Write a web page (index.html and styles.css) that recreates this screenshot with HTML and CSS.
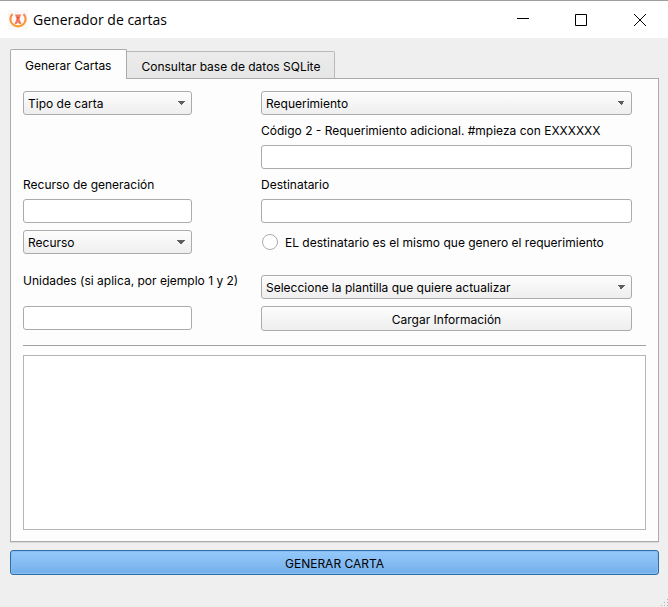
FILE: index.html
```html
<!DOCTYPE html>
<html lang="es">
<head>
<meta charset="utf-8">
<meta name="viewport" content="width=device-width, initial-scale=1">
<title>Generador de cartas</title>
<link rel="stylesheet" href="styles.css">
</head>
<body>
<div class="window">
  <header class="titlebar">
    <svg class="logo" width="20" height="20" viewBox="0 0 20 20" aria-hidden="true">
      <defs><linearGradient id="ring" x1="0" y1="0" x2="0" y2="1"><stop offset="0" stop-color="#f58a4b"/><stop offset="1" stop-color="#f7a02c"/></linearGradient></defs>
      <rect width="20" height="20" fill="#fbf8f7"/>
      <path d="M4.500 4A7.600 7.300 0 1 0 15.500 4" fill="none" stroke="url(#ring)" stroke-width="2.200"/>
      <path d="M7 4.500h6l-1.500 4.500 2 5h-2l-1.500-1.500-1.500 1.500h-2l2-5z" fill="#f27a5d"/>
      <path d="M9 7h2l-1 3z" fill="#d84a32"/>
    </svg>
    <h1 class="title">Generador de cartas</h1>
    <div class="window-buttons">
      <button class="window-button" type="button" aria-label="Minimizar"><svg width="12" height="12" viewBox="0 0 12 12"><path d="M0 4.500h12"/></svg></button>
      <button class="window-button" type="button" aria-label="Maximizar"><svg width="12" height="12" viewBox="0 0 12 12"><path d="M.5.5h11v11H.5z"/></svg></button>
      <button class="window-button" type="button" aria-label="Cerrar"><svg width="14" height="12" viewBox="0 0 14 12"><path d="M2 0l12 12M14 0L2 12"/></svg></button>
    </div>
  </header>
  <main class="content">
    <div class="tabs" role="tablist">
      <button class="tab tab-active" type="button" role="tab" aria-selected="true">Generar Cartas</button>
      <button class="tab" type="button" role="tab" aria-selected="false">Consultar base de datos SQLite</button>
    </div>
    <section class="panel">
      <div class="form">
        <select class="field left" aria-label="Tipo de carta"><option>Tipo de carta</option></select>
        <select class="field right" aria-label="Requerimiento"><option>Requerimiento</option></select>
        <label class="caption right" for="codigo">Código 2 - Requerimiento adicional. #mpieza con EXXXXXX</label>
        <input class="field right" id="codigo" type="text">
        <label class="caption left" for="recurso">Recurso de generación</label>
        <label class="caption right" for="destinatario">Destinatario</label>
        <input class="field left" id="recurso" type="text">
        <input class="field right" id="destinatario" type="text">
        <select class="field left" aria-label="Recurso"><option>Recurso</option></select>
        <label class="choice right"><input class="radio" type="radio"><span class="caption">EL destinatario es el mismo que genero el requerimiento</span></label>
        <label class="caption left" for="unidades">Unidades (si aplica, por ejemplo 1 y 2)</label>
        <select class="field right template" aria-label="Plantilla"><option>Seleccione la plantilla que quiere actualizar</option></select>
        <input class="field left" id="unidades" type="text">
        <button class="button right" type="button">Cargar Información</button>
      </div>
      <hr class="divider">
      <textarea class="output" aria-label="Información"></textarea>
    </section>
    <button class="button primary" type="button">GENERAR CARTA</button>
  </main>
  <svg class="grip" width="7" height="7" viewBox="0 0 7 7" aria-hidden="true"><path d="M6 0h1v1H6zM3 3h1v1H3zM6 3h1v1H6zM0 6h1v1H0zM3 6h1v1H3zM6 6h1v1H6z" fill="#b4b4b4"/></svg>
</div>
</body>
</html>
```
FILE: styles.css
```css
* {
  box-sizing: border-box;
}

body {
  margin: 0;
  background: #efefef;
  color: #000;
  font: 12px/16px Inter, "Noto Sans", sans-serif;
}

button,
input,
select,
textarea {
  margin: 0;
  color: inherit;
  font: inherit;
}

.window {
  position: relative;
  display: flex;
  flex-direction: column;
  min-height: 100vh;
  border-top: 1px solid #a19d9b;
}

.titlebar {
  display: flex;
  align-items: center;
  height: 37px;
  padding-left: 8px;
  background: #fff;
}

.title {
  flex: 1;
  margin: 0 0 0 5px;
  font: 14px/20px "Open Sans", sans-serif;
}

.window-buttons {
  display: flex;
}

.window-button {
  display: grid;
  place-items: center;
  width: 58px;
  height: 37px;
  padding: 0;
  border: 0;
  background: none;
}

.window-button svg {
  fill: none;
  stroke: #000;
}

.content {
  display: flex;
  flex: 1;
  flex-direction: column;
  padding: 11px 9px 32px 10px;
}

.tabs {
  display: flex;
  align-items: flex-end;
}

.tab {
  height: 27px;
  padding: 4px 14px 0;
  border: 1px solid #b9b9b9;
  border-width: 1px 1px 0 0;
  border-radius: 0 2px 0 0;
  background: linear-gradient(#ebebeb, #e6e6e6);
}

.tab-active {
  z-index: 1;
  height: 30px;
  margin-bottom: -1px;
  padding: 2px 15px 0 14px;
  border-color: #ababab;
  border-left-width: 1px;
  border-radius: 2px 2px 0 0;
  background: #fdfdfd;
}

.panel {
  display: flex;
  flex: 1;
  flex-direction: column;
  padding: 12px 12px 11px;
  border: 1px solid #ababab;
  background: #fdfdfd;
  box-shadow: 0 1px #dadada;
}

.form {
  display: grid;
  grid-template-columns: 231px 1fr;
  grid-template-rows: 24px 16px 24px 16px 24px 24px 38px 25px;
  gap: 7px;
  align-items: center;
  padding-right: 14px;
}

.left {
  grid-column: 1;
}

.right {
  grid-column: 2;
}

.caption {
  padding-top: 2px;
}

.field {
  width: 100%;
  height: 24px;
  padding: 1px 4px 0;
  border: 1px solid #ababab;
  border-radius: 3px;
  background: #fff;
}

.field.left {
  align-self: start;
  width: 169px;
}

select.field {
  appearance: none;
  background:
    conic-gradient(from -45deg at 50% 100%, #5e5e5e 90deg, transparent 0) right 6px center / 8px 4px no-repeat,
    linear-gradient(#fdfdfd, #eee);
}

.template {
  align-self: end;
}

.choice {
  display: flex;
  align-items: center;
  gap: 7px;
}

.radio {
  appearance: none;
  width: 16px;
  height: 16px;
  margin-left: 1px;
  border: 1px solid #ababab;
  border-radius: 50%;
  background: #fff;
}

.button {
  height: 25px;
  padding-top: 3px;
  border: 1px solid #ababab;
  border-radius: 3px;
  background: linear-gradient(#fdfdfd, #eee);
}

.divider {
  width: 100%;
  margin: 14px 0 9px;
  border: 0;
  border-top: 1px solid #a0a0a0;
}

.output {
  flex: 1;
  min-height: 80px;
  border: 1px solid #b5b5b5;
  background: #fff;
  resize: none;
}

.primary {
  margin-top: 8px;
  border-color: #306ba3;
  background: linear-gradient(#95c9fc, #74afe8);
  box-shadow: inset 0 0 0 1px #86bdf3;
}

.grip {
  position: absolute;
  right: 0;
  bottom: 1px;
}
```
